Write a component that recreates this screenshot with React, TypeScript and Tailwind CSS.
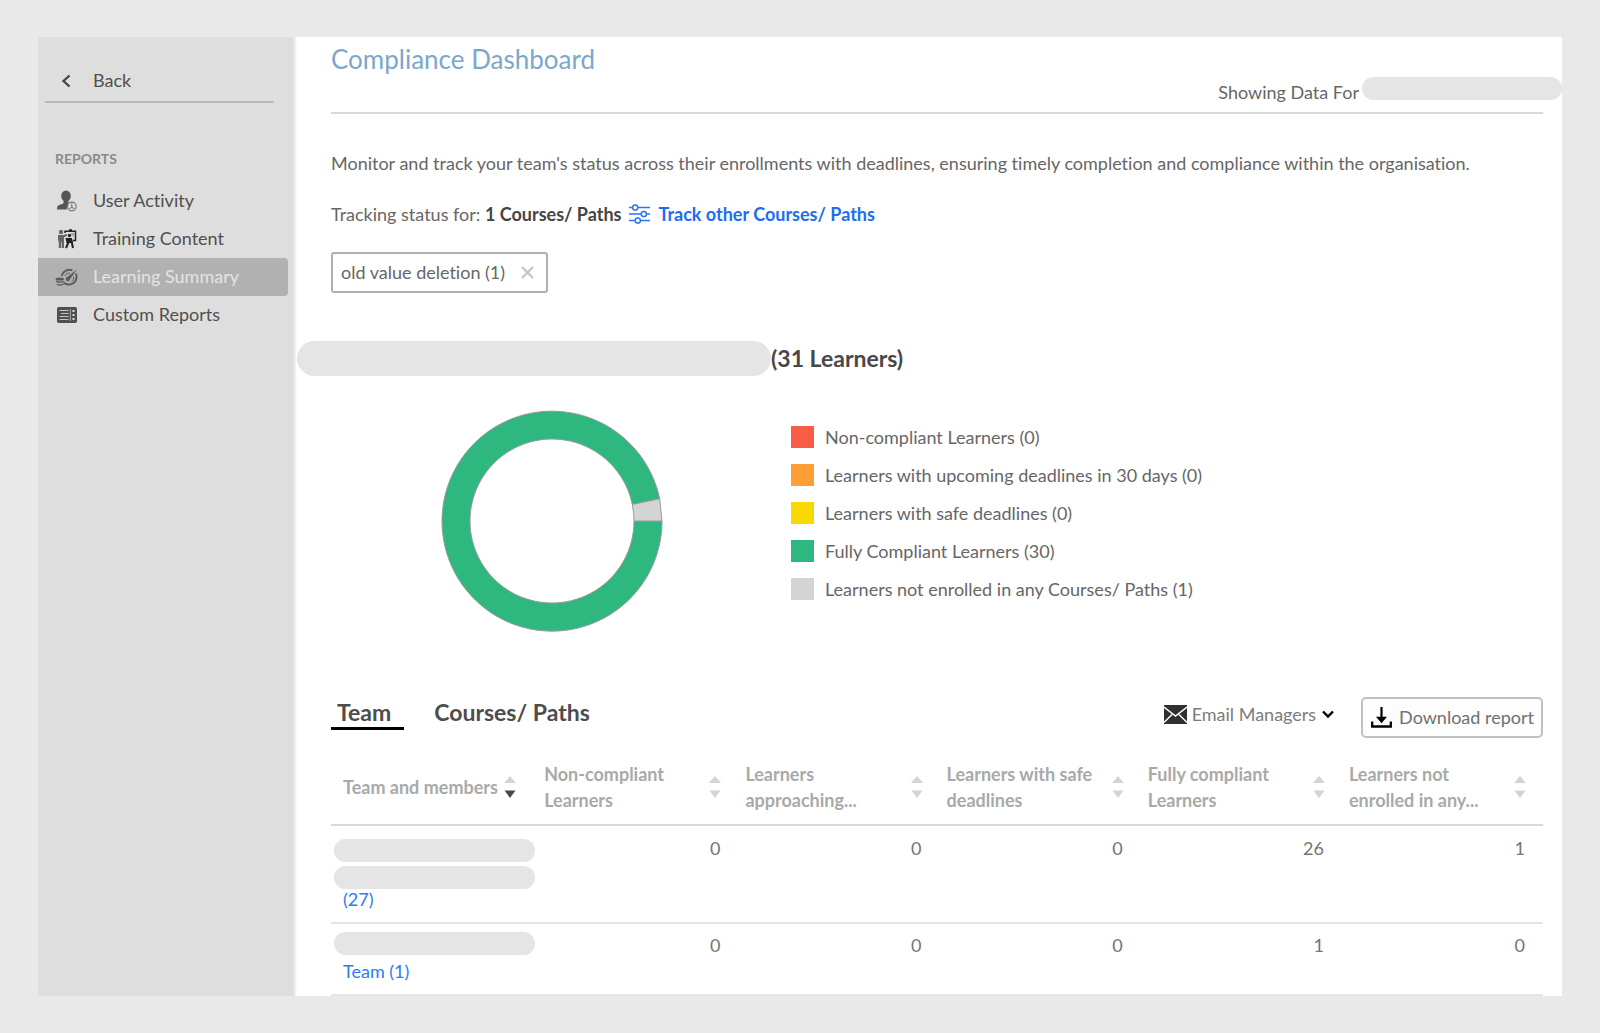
import React from "react";

const legend = [
  { label: "Non-compliant Learners (0)", swatch: "bg-[#f85c46]" },
  { label: "Learners with upcoming deadlines in 30 days (0)", swatch: "bg-[#ff9f35]" },
  { label: "Learners with safe deadlines (0)", swatch: "bg-[#f8d904]" },
  { label: "Fully Compliant Learners (30)", swatch: "bg-[#2fb780]" },
  { label: "Learners not enrolled in any Courses/ Paths (1)", swatch: "bg-[#d4d4d4]" },
];

const columns = [
  ["Non-compliant", "Learners"],
  ["Learners", "approaching..."],
  ["Learners with safe", "deadlines"],
  ["Fully compliant", "Learners"],
  ["Learners not", "enrolled in any..."],
];

function UserActivityIcon() {
  return (
    <svg width="22" height="22" viewBox="0 0 22 22" aria-hidden="true">
      <ellipse cx="10" cy="6" rx="4.8" ry="5.6" fill="#555" />
      <path d="M7.6 10h4.8v3.2l2 1A5.3 5.3 0 0 0 10.600 19.500H1c0-3 .8-4 3-4.700 2.400-.8 3.600-1 3.600-2.300z" fill="#555" />
      <circle cx="15.800" cy="16.500" r="4.300" fill="#dedede" stroke="#777" strokeWidth="1.200" />
      <path d="M15.800 13.500v3.300l-2.300 2M15.800 16.800l2.300 2" fill="none" stroke="#777" strokeWidth="1.100" />
    </svg>
  );
}

function TrainingIcon() {
  return (
    <svg width="20" height="20" viewBox="0 0 20 20" aria-hidden="true">
      <circle cx="4" cy="3" r="2.200" fill="#666" />
      <path d="M1 6h5l4-1v2L7 8.200V19H4.700v-6h-.6v6H1.800v-6L1 11z" fill="#666" />
      <path d="M8 4V2.200h10.500v9.300H16" fill="none" stroke="#222" strokeWidth="1.500" />
      <path d="M12 1.200h3M12 12L9 19M14.500 12l1.500 7" fill="none" stroke="#222" strokeWidth="2" />
      <circle cx="12.500" cy="6.500" r="1.700" fill="#222" />
      <path d="M8.500 9h6.500l1 5H9.500z" fill="#222" />
      <path d="M14 4.800h2.200v2.700" fill="none" stroke="#777" strokeWidth="1" />
    </svg>
  );
}

function SummaryIcon() {
  return (
    <svg width="24" height="20" viewBox="0 0 24 20" fill="none" stroke="#5c5c5c" aria-hidden="true">
      <path d="M6.500 9C8 4 13 1.500 17.500 3.500M21 6.500c2 5-1 10.500-6.500 11-2.500.2-4.500-.6-6-2" strokeWidth="1.900" />
      <path d="M9.800 9c1-2 3-3.200 5.200-2.800M18.500 9.500c.5 2-.2 4-2 5.200" strokeWidth="1" />
      <path d="M21.800 2.500l-9.300 7.300a2.200 2.200 0 1 0 2.600 2.400z" fill="#5c5c5c" stroke="none" />
      <ellipse cx="4.800" cy="12" rx="4.300" ry="1.600" fill="#5c5c5c" stroke="none" />
      <path d="M1 14.200c2 1.300 5.500 1.300 7.500 0M2 17c1.500 1.200 4.500 1.200 6.500 0" strokeWidth="1.400" />
    </svg>
  );
}

function ReportsIcon() {
  return (
    <svg width="20" height="16" viewBox="0 0 20 16" aria-hidden="true">
      <rect width="20" height="16" rx="1.800" fill="#4f4f4f" />
      <path d="M2.500 3.500h9M4 6.500h7.500M2.500 9.500h9M2.500 12.500h9" stroke="#c8c8c8" strokeWidth="1" />
      <path d="M13.300 2v12" stroke="#c8c8c8" strokeWidth=".8" />
      <path d="M15.500 3h2v2h-2zM15.500 7h2v2h-2zM15.500 11h2v2h-2z" fill="#dedede" />
    </svg>
  );
}

function SortIcon({ active = false }: { active?: boolean }) {
  return (
    <svg className="shrink-0" width="12" height="22" viewBox="0 0 12 22" aria-hidden="true">
      <path d="M6 0l6 7H0z" fill="#d4d4d4" />
      <path d="M6 22l5.500-7.500H.5z" fill={active ? "#484848" : "#d4d4d4"} />
    </svg>
  );
}

const nav = [
  { label: "User Activity", icon: <UserActivityIcon /> },
  { label: "Training Content", icon: <TrainingIcon /> },
  { label: "Learning Summary", icon: <SummaryIcon />, active: true },
  { label: "Custom Reports", icon: <ReportsIcon /> },
];

function Sidebar() {
  return (
    <aside className="w-[255px] shrink-0 bg-[#dedede]">
      <div className="mr-[19px] ml-[7px] border-b-2 border-[#b9b9b9] pt-[31px] pb-[9px]">
        <button type="button" className="flex items-center pl-4 leading-6 text-[#505050]">
          <svg className="mt-[2px]" width="10" height="14" viewBox="0 0 10 14" fill="none" stroke="#444" strokeWidth="2.300" aria-hidden="true">
            <path d="M8.500 1.500L2.500 7l6 5.500" />
          </svg>
          <span className="ml-[22px]">Back</span>
        </button>
      </div>
      <h2 className="mt-11 pl-[17px] text-sm leading-6 font-bold text-[#8a8a8a]">REPORTS</h2>
      <nav className="mt-[11px] pr-[5px]">
        {nav.map((n) => (
          <a
            key={n.label}
            href="#"
            aria-current={n.active ? "page" : undefined}
            className={
              n.active
                ? "flex h-[38px] items-center rounded-r bg-[#b1b1b1] pl-[17px] text-[#e4e4e4]"
                : "flex h-[38px] items-center pl-[17px] text-[#505050]"
            }
          >
            <span className="flex w-6 justify-center">{n.icon}</span>
            <span className="ml-[14px] pb-[2px]">{n.label}</span>
          </a>
        ))}
      </nav>
    </aside>
  );
}

function Donut() {
  return (
    <svg width="222" height="222" viewBox="-111 -111 222 222" role="img" aria-label="Compliance breakdown: 30 fully compliant, 1 not enrolled">
      <g stroke="#999" strokeWidth="1">
        <path fillRule="evenodd" fill="#2fb780" d="M110 0A110 110 0 1 1 107.700 -22.200L80.300 -16.600A82 82 0 1 0 82 0z" />
        <path fill="#d4d4d4" d="M110 0L107.700 -22.200L80.300 -16.600A82 82 0 0 1 82 0z" />
      </g>
    </svg>
  );
}

function Redacted() {
  return <span className="-ml-[9px] block h-[23px] w-[201px] rounded-full bg-[#e5e5e5]" />;
}

const cell = "border-b-2 border-[#e5e5e5] pr-[13px] text-right align-top leading-[26px] text-[#757575]";

export default function App() {
  return (
    <div className="flex min-h-screen bg-[#e9e9e9] px-[38px] pt-[37px] pb-[37px] font-['Lato',sans-serif] text-[18px] [font-variant-ligatures:none]">
      <Sidebar />
      <div className="w-1 shrink-0 bg-linear-to-r from-[#dedede] to-white" />
      <main className="min-w-0 flex-1 bg-white pr-[19px] pl-[34px] text-[#666]">
        <header className="flex h-[77px] items-end justify-between border-b-2 border-[#d9d9d9]">
          <h1 className="self-start text-[26px] leading-[45px] text-[#7ba7cc]">Compliance Dashboard</h1>
          <div className="-mr-[19px] flex items-end pb-2">
            <span className="leading-6">Showing Data For</span>
            <span className="mb-1 ml-[3px] h-[23px] w-[200px] rounded-full bg-[#e5e5e5]" />
          </div>
        </header>

        <p className="mt-9 leading-[26px]">
          Monitor and track your team's status across their enrollments with deadlines, ensuring timely completion and
          compliance within the organisation.
        </p>

        <div className="mt-[25px] flex items-center leading-[26px]">
          <span>
            Tracking status for: <strong className="text-[#454545]">1 Courses/ Paths</strong>
          </span>
          <a href="#" className="ml-2 flex items-center font-bold text-[#1a6ef0]">
            <svg className="mr-2" width="21" height="20" viewBox="0 0 21 20" fill="none" stroke="#2a76ee" strokeWidth="1.500" aria-hidden="true">
              <path d="M0 3.500h3.500M9 3.500h12M0 10h12M17.500 10H21M0 16.500h6M11.500 16.500H21" />
              <circle cx="6.200" cy="3.500" r="2.600" />
              <circle cx="14.800" cy="10" r="2.600" />
              <circle cx="8.800" cy="16.500" r="2.600" />
            </svg>
            Track other Courses/ Paths
          </a>
        </div>

        <div className="mt-[25px] flex h-[41px] w-fit items-center rounded-[3px] border-2 border-[#b0b0b0] pr-3 pl-2">
          <span className="pb-[2px] leading-6">old value deletion (1)</span>
          <button type="button" aria-label="Remove old value deletion" className="ml-4">
            <svg width="13" height="13" viewBox="0 0 13 13" stroke="#c6c6c6" strokeWidth="2.400" aria-hidden="true">
              <path d="M1 1l11 11M12 1L1 12" />
            </svg>
          </button>
        </div>

        <div className="mt-12 -ml-[34px] flex h-[35px] items-center">
          <span className="h-[35px] w-[474px] rounded-full bg-[#e5e5e5]" />
          <h2 className="text-[23px] leading-[35px] font-bold text-[#484848]">(31 Learners)</h2>
        </div>

        <section className="mt-[34px] flex items-start pl-[110px]">
          <Donut />
          <ul className="mt-[8px] ml-32">
            {legend.map((l) => (
              <li key={l.label} className="flex h-[38px] items-center">
                <span className={"mr-[11px] h-[22px] w-[23px] " + l.swatch} />
                {l.label}
              </li>
            ))}
          </ul>
        </section>

        <div className="mt-[65px] flex items-start">
          <div className="flex text-[23px] leading-[30px] font-bold text-[#4d4d4d]" role="tablist">
            <button type="button" role="tab" aria-selected="true" className="border-b-3 border-black pr-[13px] pl-[6px]">
              Team
            </button>
            <button type="button" role="tab" aria-selected="false" className="ml-[30px] self-start">
              Courses/ Paths
            </button>
          </div>
          <button type="button" className="mt-[5px] ml-auto flex items-center leading-6 text-[#7c7c7c]">
            <svg className="mr-[5px]" width="23" height="19" viewBox="0 0 23 19" aria-hidden="true">
              <rect width="23" height="19" fill="#303030" />
              <path d="M0 2l11.500 9L23 2M0 17.500l8-8M23 17.500l-8-8" fill="none" stroke="#fff" strokeWidth="1.400" />
            </svg>
            Email Managers
            <svg className="ml-[6px]" width="12" height="9" viewBox="0 0 12 9" fill="none" stroke="#000" strokeWidth="2.400" aria-hidden="true">
              <path d="M1 1.500l5 5 5-5" />
            </svg>
          </button>
          <button
            type="button"
            className="ml-[27px] flex h-[41px] items-center rounded-[5px] border-2 border-[#c0c0c0] bg-[#fdfdfd] pr-[7px] pl-2 text-[#707070]"
          >
            <svg className="mr-[7px]" width="21" height="21" viewBox="0 0 21 21" aria-hidden="true">
              <path d="M1.200 14.500v5h18.600v-5" fill="none" stroke="#000" strokeWidth="2.300" />
              <path d="M10.500 0v11" stroke="#000" strokeWidth="2.200" />
              <path d="M5 9.800h11l-5.500 6.500z" />
            </svg>
            Download report
          </button>
        </div>

        <table className="mt-[23px] w-full table-fixed border-separate border-spacing-0">
          <colgroup>
            <col className="w-[16.6%]" />
            <col className="w-[16.6%]" />
            <col className="w-[16.6%]" />
            <col className="w-[16.6%]" />
            <col className="w-[16.6%]" />
            <col />
          </colgroup>
          <thead>
            <tr className="text-left leading-[26px] text-[#a9a9a9]">
              <th className="border-b-2 border-[#d9d9d9] pb-[11px] pl-3 align-middle font-bold">
                <button type="button" className="flex items-center gap-[6px] whitespace-nowrap">
                  Team and members
                  <SortIcon active />
                </button>
              </th>
              {columns.map(([a, b], i) => (
                <th
                  key={i}
                  className={
                    i === 4
                      ? "border-b-2 border-[#d9d9d9] pr-[17px] pb-[11px] pl-3 font-bold"
                      : "border-b-2 border-[#d9d9d9] pr-3 pb-[11px] pl-3 font-bold"
                  }
                >
                  <button type="button" className="flex w-full items-center justify-between text-left whitespace-nowrap">
                    <span>
                      <span className="block">{a}</span>
                      <span className="block">{b}</span>
                    </span>
                    <SortIcon />
                  </button>
                </th>
              ))}
            </tr>
          </thead>
          <tbody>
            <tr>
              <td className="border-b-2 border-[#e5e5e5] pt-[13px] pb-[13px] pl-3 align-top">
                <Redacted />
                <span className="block h-1" />
                <Redacted />
                <a href="#" className="block leading-5 text-[#2f7bf0]">(27)</a>
              </td>
              {[0, 0, 0, 26].map((v, i) => (
                <td key={i} className={cell + " pt-[9px]"}>{v}</td>
              ))}
              <td className={cell + " pt-[9px]"}><span className="mr-[5px]">1</span></td>
            </tr>
            <tr>
              <td className="border-b-2 border-[#e5e5e5] pt-2 pb-[13px] pl-3 align-top">
                <Redacted />
                <a href="#" className="mt-[6px] block leading-5 text-[#2f7bf0]">Team (1)</a>
              </td>
              {[0, 0, 0, 1].map((v, i) => (
                <td key={i} className={cell + " pt-2"}>{v}</td>
              ))}
              <td className={cell + " pt-2"}><span className="mr-[5px]">0</span></td>
            </tr>
          </tbody>
        </table>
      </main>
    </div>
  );
}
